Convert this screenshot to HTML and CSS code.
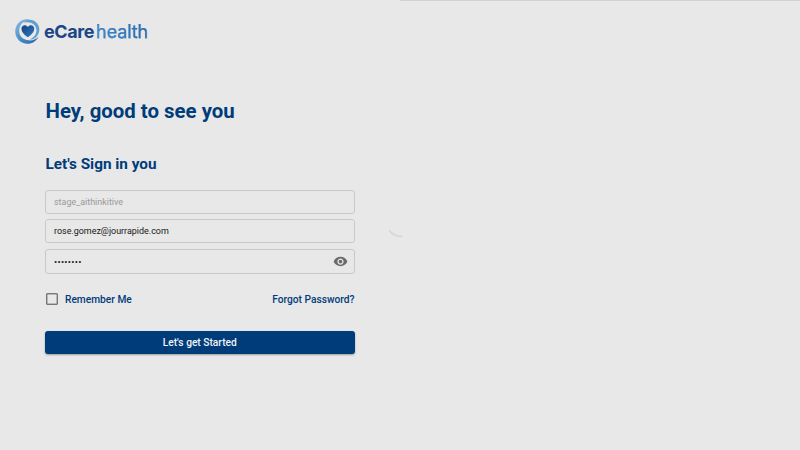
FILE: index.html
```html
<!DOCTYPE html>
<html lang="en">
<head>
<meta charset="utf-8">
<title>eCare health</title>
<link rel="stylesheet" href="styles.css">
</head>
<body>
<main class="page">
  <section class="panel">
    <header class="brand">
      <svg class="brand-mark" viewBox="0 0 24 24">
        <defs>
          <linearGradient id="ring" x1="0" y1="0" x2="1" y2="1"><stop offset="0" stop-color="#8fc0e4"/><stop offset=".5" stop-color="#4a8fc8"/><stop offset="1" stop-color="#2264a8"/></linearGradient>
          <linearGradient id="heart" x1="0" y1="0" x2="1" y2="1"><stop offset="0" stop-color="#163f82"/><stop offset="1" stop-color="#2f7dc0"/></linearGradient>
        </defs>
        <path d="M14 .4C6.500-1 .2 4.500.2 12c0 6.500 5.300 11.800 11.800 11.800 4.800 0 8.700-2.800 10.600-6.800-3 2.800-6.300 4-9.600 3.500C7.500 20 4 16.300 4 11.300 4 5.500 8 1.500 14 .4z" fill="url(#ring)"/>
        <path d="M8 3.500C11-.3 18-.5 21.500 4.500c3.200 4.800 2.300 10.500-2.500 14-1.500 1-3.500 1.500-5 1.200 4.500-1.900 6.800-5.400 6.600-9.400C20.300 5 15 1.800 8 3.500z" fill="#629fd0"/>
        <path d="M12.300 17.500C8.300 14.700 6.200 12.300 6.200 9.300c0-3.400 4.100-4.500 6.100-1.700 2.100-2.800 6.200-1.700 6.200 1.700 0 3-2.200 5.400-6.200 8.200z" fill="url(#heart)"/>
      </svg>
      <span class="brand-name">eCare</span><span class="brand-sub">health</span>
    </header>
    <form class="signin">
      <h1>Hey, good to see you</h1>
      <h2>Let's Sign in you</h2>
      <div class="fields">
        <div class="field muted"><span>stage_aithinkitive</span></div>
        <div class="field email"><span>rose.gomez@jourrapide.com</span></div>
        <div class="field password"><span class="dots">••••••••</span>
          <svg class="eye" viewBox="0 0 24 24"><path d="M12 4.500C7 4.500 2.730 7.610 1 12c1.730 4.390 6 7.500 11 7.500s9.270-3.110 11-7.500c-1.730-4.390-6-7.500-11-7.500zM12 17c-2.760 0-5-2.240-5-5s2.240-5 5-5 5 2.240 5 5-2.240 5-5 5zm0-8c-1.660 0-3 1.340-3 3s1.340 3 3 3 3-1.340 3-3-1.340-3-3-3z"/></svg>
        </div>
      </div>
      <div class="options">
        <label class="remember"><i class="box"></i><span>Remember Me</span></label>
        <a class="forgot">Forgot Password?</a>
      </div>
      <button class="submit" type="button">Let's get Started</button>
    </form>
  </section>
  <section class="aside"></section>
  <svg class="spinner" viewBox="0 0 20 12"><path d="M3.500 3.500Q8 10 16.500 9.300" fill="none" stroke="#d6d6d6" stroke-width="1.600"/></svg>
</main>
</body>
</html>
```
FILE: styles.css
```css
* { box-sizing: border-box; }
body { margin: 0; background: #e8e8e8; font-family: Roboto, sans-serif; color: #003c7a; }
.page { position: relative; display: grid; grid-template-columns: 400px 400px; height: 450px; overflow: hidden; }
.panel { padding: 19px 45px 0 15px; }
.aside { border-top: 1px solid #d2d2d2; }
.brand { display: flex; align-items: center; height: 25px; font-family: Inter, sans-serif; font-size: 18px; line-height: 25px; }
.brand-mark { width: 25px; height: 25px; margin-right: 4px; }
.brand-name { font-weight: 700; letter-spacing: -0.4px; color: #1d4688; }
.brand-sub { margin-left: 2px; letter-spacing: -0.1px; color: transparent; background: linear-gradient(90deg, #3f8bca, #2a68ab); background-clip: text; -webkit-background-clip: text; -webkit-text-stroke: .25px #3579ba; }
.signin { width: 309.500px; margin: 55px 0 0 30px; }
h1 { margin: 0 0 0 .5px; font-size: 20.400px; line-height: 24px; font-weight: 700; white-space: nowrap; }
h2 { margin: 31px 0 0 .5px; font-size: 15.300px; line-height: 20px; font-weight: 700; }
.fields { display: grid; gap: 5px; margin-top: 16px; }
.field { display: flex; align-items: center; justify-content: space-between; height: 24px; padding: 0 6px 0 8px; border: 1px solid #c8c8c8; border-radius: 3px; font-size: 8.950px; line-height: 12px; color: #161616; }
.field.muted { color: #989898; }
.field.password { height: 25px; margin-top: 1px; }
.dots { font-size: 9.500px; letter-spacing: .25px; }
.eye { width: 15px; height: 15px; fill: #6b6b6b; }
.options { display: flex; justify-content: space-between; align-items: center; height: 14px; margin-top: 18px; font-size: 10.200px; line-height: 14px; font-weight: 500; }
.remember { display: flex; align-items: center; }
.remember span, .forgot { padding-top: 1px; line-height: 15px; }
.box { width: 12px; height: 12px; margin: 0 7px 0 1px; border: 1px solid #777; box-shadow: inset 0 0 0 .5px #888; border-radius: 1px; }
.submit { display: block; width: 100%; height: 23px; margin-top: 25px; padding: 0; border: 0; border-radius: 3px; background: #003c7a; box-shadow: 0 1px 2px rgba(0,0,0,.35); color: #f0f4f8; font: 500 10.200px/23px Roboto, sans-serif; }
.spinner { position: absolute; left: 386px; top: 227px; width: 20px; height: 12px; }
```
